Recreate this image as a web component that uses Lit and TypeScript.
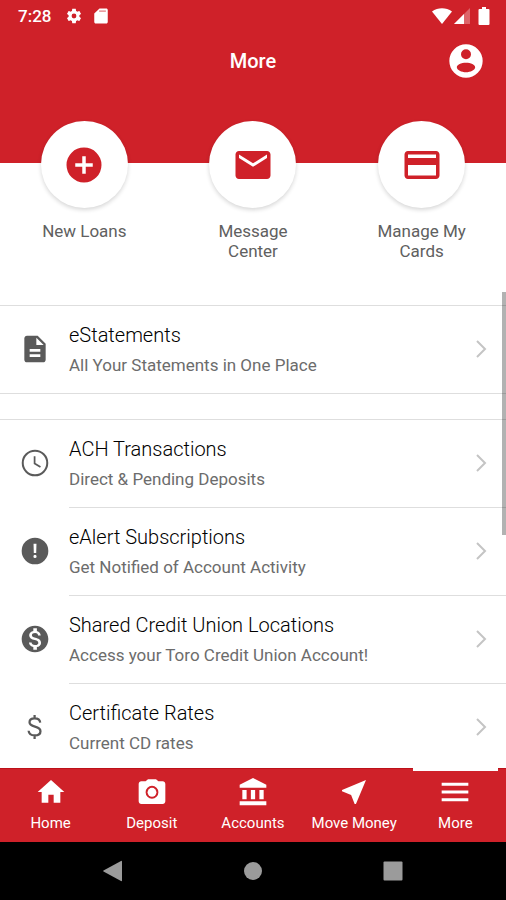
import { LitElement, html, css, svg } from "lit";
import { customElement, state } from "lit/decorators.js";
import { classMap } from "lit/directives/class-map.js";

const RED = css`#cf2129`;

const icons = {
  settings: svg`<path d="M19.14 12.94c.04-.3.06-.61.06-.94 0-.32-.02-.64-.07-.94l2.03-1.58c.18-.14.23-.41.12-.61l-1.92-3.32c-.12-.22-.37-.29-.59-.22l-2.39.96c-.5-.38-1.03-.7-1.62-.94l-.36-2.54c-.04-.24-.24-.41-.48-.41h-3.84c-.24 0-.43.17-.47.41l-.36 2.54c-.59.24-1.13.57-1.62.94l-2.39-.96c-.22-.08-.47 0-.59.22L2.74 8.87c-.12.21-.08.47.12.61l2.03 1.58c-.05.3-.09.63-.09.94s.02.64.07.94l-2.03 1.58c-.18.14-.23.41-.12.61l1.92 3.32c.12.22.37.29.59.22l2.39-.96c.5.38 1.03.7 1.62.94l.36 2.54c.05.24.24.41.48.41h3.84c.24 0 .44-.17.47-.41l.36-2.54c.59-.24 1.13-.56 1.62-.94l2.39.96c.22.08.47 0 .59-.22l1.92-3.32c.12-.22.07-.47-.12-.61l-2.01-1.58zM12 15.200a3.200 3.200 0 1 1 0-6.400 3.200 3.200 0 0 1 0 6.400z"/>`,
  sdCard: svg`<path d="M19 2h-9L3 8.500V20c0 1.100.9 2 2 2h14c1.100 0 2-.9 2-2V4c0-1.100-.9-2-2-2z"/><path d="M9.500 4.500h9v2h-9z" fill="#cf2129" opacity=".5"/>`,
  account: svg`<path d="M12 2a10 10 0 1 0 0 20 10 10 0 0 0 0-20zm0 3a3 3 0 1 1 0 6 3 3 0 0 1 0-6zm0 13.700c-2.700 0-5.500-1.300-5.500-3 0-1.600 2.600-2.700 5.500-2.700s5.500 1.100 5.500 2.700c0 1.700-2.800 3-5.500 3z"/>`,
  plus: svg`<path d="M12 2a10 10 0 1 0 0 20 10 10 0 0 0 0-20zm5 11h-4v4h-2v-4H7v-2h4V7h2v4h4v2z"/>`,
  mail: svg`<path d="M20 4H4c-1.100 0-2 .9-2 2v12c0 1.100.9 2 2 2h16c1.100 0 2-.9 2-2V6c0-1.100-.9-2-2-2zm0 4-8 5-8-5V6l8 5 8-5v2z"/>`,
  card: svg`<path d="M20 4H4c-1.110 0-2 .89-2 2v12c0 1.110.89 2 2 2h16c1.110 0 2-.89 2-2V6c0-1.110-.89-2-2-2zm0 14H4v-6h16v6zm0-10H4V6h16v2z"/>`,
  doc: svg`<path d="M14 2H6c-1.100 0-2 .9-2 2v16c0 1.100.9 2 2 2h12c1.100 0 2-.9 2-2V8l-6-6zm2 16H8v-2h8v2zm0-4H8v-2h8v2zm-3-5V3.500L18.500 9H13z"/>`,
  clock: svg`<circle cx="12" cy="12" r="9.200" fill="none" stroke="currentColor" stroke-width="1.500"/><path d="M11.700 7v5.300l4.400 2.700" fill="none" stroke="currentColor" stroke-width="1.300"/>`,
  alert: svg`<path d="M12 2a10 10 0 1 0 0 20 10 10 0 0 0 0-20zm1.100 4.500-.2 7h-1.800l-.2-7h2.200zM12 17.300a1.200 1.200 0 1 1 0-2.400 1.200 1.200 0 0 1 0 2.400z"/>`,
  coin: svg`<path d="M12 2C6.480 2 2 6.480 2 12s4.480 10 10 10 10-4.480 10-10S17.520 2 12 2zm1.410 16.090V20h-2.670v-1.930c-1.710-.36-3.160-1.460-3.270-3.400h1.960c.1 1.050.82 1.870 2.650 1.870 1.960 0 2.400-.98 2.400-1.590 0-.83-.44-1.610-2.670-2.140-2.480-.6-4.180-1.620-4.180-3.670 0-1.720 1.390-2.840 3.110-3.210V4h2.670v1.950c1.860.45 2.790 1.860 2.850 3.390H14.300c-.05-1.110-.64-1.870-2.220-1.870-1.500 0-2.400.68-2.400 1.640 0 .84.65 1.390 2.670 1.910s4.180 1.390 4.180 3.910c-.01 1.830-1.380 2.830-3.120 3.160z"/>`,
  dollar: svg`<path d="M15.900 8.700C15.700 6.700 14.100 5.600 11.700 5.600c-2.300 0-3.800 1.200-3.800 2.900 0 4.200 8.200 2.300 8.200 6.600 0 2-1.700 3.200-4.300 3.200-2.700 0-4.400-1.300-4.600-3.500M11.700 3v2.800M11.700 18.100V21" fill="none" stroke="currentColor" stroke-width="1.700"/>`,
  home: svg`<path d="M10 20v-6h4v6h5v-8h3L12 3 2 12h3v8z"/>`,
  camera: svg`<path d="M20 4h-3.200L15 2.500H9L7.200 4H4c-1.100 0-2 .9-2 2v13c0 1.100.9 2 2 2h16c1.100 0 2-.9 2-2V6c0-1.100-.9-2-2-2zm-8 13a4.800 4.800 0 1 1 0-9.600 4.800 4.800 0 0 1 0 9.600z"/><circle cx="12" cy="12.200" r="3.300"/>`,
  bank: svg`<path d="M4 10.500v7h3.200v-7H4zm6.400 0v7h3.200v-7h-3.200zM2 22h20v-3H2v3zM16.800 10.500v7H20v-7h-3.200zM12 1.500 2 6.500v2.300h20V6.500L12 1.500z"/>`,
  send: svg`<path d="M21 3 3 10.530v.98l6.840 2.650L12.480 21h.98L21 3z"/>`,
  menu: svg`<path d="M2 5h20v2.400H2zM2 10.800h20v2.400H2zM2 16.600h20V19H2z"/>`,
};

type IconName = keyof typeof icons;

const icon = (name: IconName) =>
  html`<svg class="icon" viewBox="0 0 24 24" fill="currentColor" aria-hidden="true">${icons[name]}</svg>`;

interface Row {
  icon: IconName;
  title: string;
  detail: string;
}

@customElement("more-row")
export class MoreRow extends LitElement {
  static properties = { row: { attribute: false } };
  declare row: Row;

  static styles = css`
    :host { display: block; }
    .row {
      display: flex;
      align-items: stretch;
      width: 100%;
      padding: 0 0 0 19px;
      border: 0;
      background: none;
      font: inherit;
      text-align: left;
      color: #5a5a5a;
      cursor: pointer;
    }
    .icon { width: 32px; height: 32px; flex: none; align-self: center; }
    .body {
      flex: 1;
      display: flex;
      align-items: center;
      margin-left: 18px;
      padding: 13px 19px 14px 0;
      border-top: 1px solid var(--row-line, #dedede);
      min-width: 0;
    }
    .text { flex: 1; min-width: 0; }
    .title, .detail { display: block; }
    .title { font-size: 20px; line-height: 32px; font-weight: 300; color: #000; }
    .detail { font-size: 17px; line-height: 28px; color: #6c6c6c; }
    .chevron { width: 12px; height: 18px; flex: none; color: #c4c4c4; }
  `;

  render() {
    return html`
      <button class="row" type="button">
        ${icon(this.row.icon)}
        <span class="body">
          <span class="text">
            <span class="title">${this.row.title}</span>
            <span class="detail">${this.row.detail}</span>
          </span>
          <svg class="chevron" viewBox="0 0 12 18" fill="none" stroke="currentColor" stroke-width="2" aria-hidden="true">
            <path d="M2 1l8 8-8 8" />
          </svg>
        </span>
      </button>
    `;
  }
}

@customElement("app-root")
export class AppRoot extends LitElement {
  @state() private tab = "More";

  private shortcuts: { icon: IconName; label: string }[] = [
    { icon: "plus", label: "New Loans" },
    { icon: "mail", label: "Message Center" },
    { icon: "card", label: "Manage My Cards" },
  ];

  private groups: Row[][] = [
    [{ icon: "doc", title: "eStatements", detail: "All Your Statements in One Place" }],
    [
      { icon: "clock", title: "ACH Transactions", detail: "Direct & Pending Deposits" },
      { icon: "alert", title: "eAlert Subscriptions", detail: "Get Notified of Account Activity" },
      { icon: "coin", title: "Shared Credit Union Locations", detail: "Access your Toro Credit Union Account!" },
      { icon: "dollar", title: "Certificate Rates", detail: "Current CD rates" },
    ],
  ];

  private tabs: { icon: IconName; label: string }[] = [
    { icon: "home", label: "Home" },
    { icon: "camera", label: "Deposit" },
    { icon: "bank", label: "Accounts" },
    { icon: "send", label: "Move Money" },
    { icon: "menu", label: "More" },
  ];

  static styles = css`
    :host {
      display: flex;
      flex-direction: column;
      height: 100vh;
      background: #fff;
      font-family: Roboto, "Liberation Sans", sans-serif;
    }
    button { font: inherit; color: inherit; border: 0; background: none; padding: 0; cursor: pointer; }
    svg { display: block; }

    .top { flex: none; background: ${RED}; color: #fff; }
    .status {
      display: flex;
      align-items: center;
      height: 32px;
      padding: 0 16px 0 18px;
      font-size: 17px;
      font-weight: 500;
    }
    .status .icon { width: 18px; height: 18px; }
    .clock { margin-right: 14px; }
    .notices { display: flex; gap: 9px; flex: 1; }
    .signals { display: flex; align-items: center; }
    .wifi { width: 20px; height: 16px; }
    .cell { width: 16px; height: 16px; margin: 0 8px 0 2px; }
    .battery { width: 12px; height: 18px; }

    .bar {
      display: grid;
      grid-template-columns: 1fr auto 1fr;
      align-items: center;
      height: 58px;
      padding: 0 20px;
    }
    h1 { grid-column: 2; margin: 0; font-size: 20px; line-height: 24px; font-weight: 500; }
    .profile { justify-self: end; }
    .profile .icon { width: 40px; height: 40px; }

    .shortcuts {
      flex: none;
      display: grid;
      grid-template-columns: repeat(3, 1fr);
      padding: 31px 0 44px;
      background: linear-gradient(${RED} 73px, #fff 73px);
    }
    .shortcut {
      display: flex;
      flex-direction: column;
      align-items: center;
      gap: 13px;
      font-size: 17px;
      line-height: 20px;
      color: #606060;
    }
    .disc {
      display: grid;
      place-items: center;
      width: 87px;
      height: 87px;
      border-radius: 50%;
      background: #fff;
      color: ${RED};
      box-shadow: 0 2px 4px rgba(0, 0, 0, 0.16);
    }
    .disc .icon { width: 42px; height: 42px; }
    .caption { max-width: 100px; }

    .content { flex: 1; min-height: 0; overflow: hidden; position: relative; display: flex; flex-direction: column; }
    .group { list-style: none; margin: 0; padding: 0; border-top: 1px solid #dedede; }
    .group + .group { margin-top: 25px; }
    .group:first-of-type { border-bottom: 1px solid #dedede; }
    .first { --row-line: transparent; margin-top: -1px; }
    .thumb {
      position: absolute;
      top: 202px;
      right: 0;
      width: 4px;
      height: 243px;
      background: rgba(0, 0, 0, 0.3);
    }

    .tabs {
      flex: none;
      display: grid;
      grid-template-columns: repeat(5, 1fr);
      height: 74px;
      background: ${RED};
      box-shadow: inset 0 1px 0 #bd1119;
    }
    .tab {
      display: flex;
      flex-direction: column;
      align-items: center;
      color: #fff;
      font-size: 15px;
      line-height: 20px;
      white-space: nowrap;
    }
    .tab::before { content: ""; align-self: stretch; height: 3px; margin: 0 8px 5px; }
    .tab.active::before { background: #fff; }
    .tab .icon { width: 32px; height: 32px; margin-bottom: 5px; }

    .system {
      flex: none;
      display: flex;
      align-items: center;
      justify-content: center;
      gap: 108px;
      height: 58px;
      background: #000;
      color: #9b9b9b;
    }
    .system svg { width: 32px; height: 32px; }
  `;

  render() {
    return html`
      <header class="top">
        <div class="status">
          <span class="clock">7:28</span>
          <span class="notices">${icon("settings")}${icon("sdCard")}</span>
          <span class="signals">
            <svg class="wifi" viewBox="0 0 20 16" fill="currentColor" aria-hidden="true"><path d="M0 3.500C6-.8 14-.8 20 3.500L10 16z" /></svg>
            <svg class="cell" viewBox="0 0 16 16" fill="currentColor" aria-hidden="true">
              <path d="M16 0v16H0z" opacity=".3" /><path d="M10 6v10H0z" />
            </svg>
            <svg class="battery" viewBox="0 0 12 18" fill="currentColor" aria-hidden="true">
              <path d="M4 0h4v2h2.500q1 0 1 1v14q0 1-1 1h-9q-1 0-1-1V3q0-1 1-1H4z" />
            </svg>
          </span>
        </div>
        <div class="bar">
          <h1>More</h1>
          <button class="profile" type="button" aria-label="Profile">${icon("account")}</button>
        </div>
      </header>

      <main class="content">
        <nav class="shortcuts" aria-label="Shortcuts">
          ${this.shortcuts.map(
            (s) => html`
              <button class="shortcut" type="button">
                <span class="disc">${icon(s.icon)}</span>
                <span class="caption">${s.label}</span>
              </button>
            `
          )}
        </nav>
        ${this.groups.map(
          (rows) => html`
            <ul class="group">
              ${rows.map((row, i) => html`<li class=${classMap({ first: i === 0 })}><more-row .row=${row}></more-row></li>`)}
            </ul>
          `
        )}
        <div class="thumb"></div>
      </main>

      <nav class="tabs" aria-label="Main">
        ${this.tabs.map(
          (t) => html`
            <button
              type="button"
              class=${classMap({ tab: true, active: t.label === this.tab })}
              @click=${() => (this.tab = t.label)}
            >
              ${icon(t.icon)}<span>${t.label}</span>
            </button>
          `
        )}
      </nav>

      <div class="system">
        <button type="button" aria-label="Back"><svg viewBox="0 0 32 32" fill="currentColor"><path d="M25 6.500v19q0 1-1 .5L6.500 16.500q-.8-.5 0-1L24 6q1-.5 1 .5z" /></svg></button>
        <button type="button" aria-label="Home screen"><svg viewBox="0 0 32 32" fill="currentColor"><circle cx="16" cy="16" r="9" /></svg></button>
        <button type="button" aria-label="Recent apps"><svg viewBox="0 0 32 32" fill="currentColor"><rect x="6.500" y="6.500" width="19" height="19" rx="1" /></svg></button>
      </div>
    `;
  }
}
